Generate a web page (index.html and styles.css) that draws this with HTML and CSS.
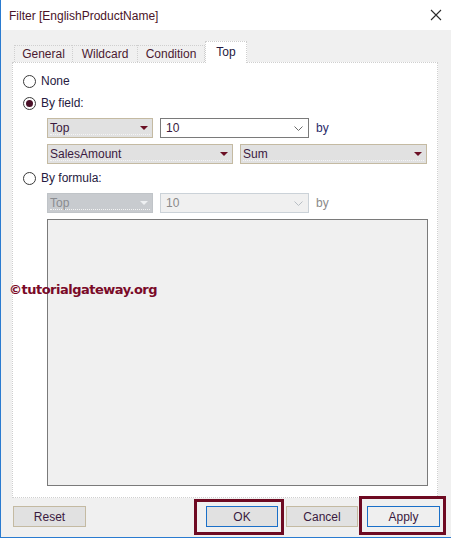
FILE: index.html
```html
<!DOCTYPE html>
<html>
<head>
<meta charset="utf-8">
<link rel="stylesheet" href="styles.css">
</head>
<body>
<div class="window">
  <div class="titlebar">
    <span class="title">Filter [EnglishProductName]</span>
    <svg class="close" width="12" height="12" viewBox="0 0 12 12"><path d="M1 1 L11 11 M11 1 L1 11" stroke="#2a2a2a" stroke-width="1.1" fill="none"/></svg>
  </div>
  <div class="body">
    <div class="tabs">
      <div class="tab t-general">General</div>
      <div class="tab t-wild">Wildcard</div>
      <div class="tab t-cond">Condition</div>
      <div class="tab active t-top">Top</div>
    </div>
    <div class="panel">
      <div class="radio-row r-none"><span class="radio"></span><span class="label">None</span></div>
      <div class="radio-row r-field"><span class="radio checked"></span><span class="label">By field:</span></div>
      <div class="combo-row row1">
        <div class="combo c-top"><span class="ctext">Top</span><span class="arrow"></span></div>
        <div class="editcombo"><span class="ctext">10</span><svg class="chev" width="9" height="5" viewBox="0 0 9 5"><path d="M0.5 0.5 L4.5 4.5 L8.5 0.5" stroke="#6a6a6a" fill="none"/></svg></div>
        <span class="by">by</span>
      </div>
      <div class="combo-row row2">
        <div class="combo c-sales"><span class="ctext">SalesAmount</span><span class="arrow"></span></div>
        <div class="combo c-sum"><span class="ctext">Sum</span><span class="arrow"></span></div>
      </div>
      <div class="radio-row r-formula"><span class="radio"></span><span class="label">By formula:</span></div>
      <div class="combo-row row3">
        <div class="combo c-top disabled"><span class="ctext">Top</span><span class="arrow"></span></div>
        <div class="editcombo disabled"><span class="ctext">10</span><svg class="chev" width="9" height="5" viewBox="0 0 9 5"><path d="M0.5 0.5 L4.5 4.5 L8.5 0.5" stroke="#b8bec4" fill="none"/></svg></div>
        <span class="by dis">by</span>
      </div>
      <div class="formula"></div>
    </div>
    <div class="buttons">
      <div class="btn b-reset">Reset</div>
      <div class="spacer"></div>
      <div class="btn b-ok default">OK</div>
      <div class="btn b-cancel">Cancel</div>
      <div class="btn b-apply default">Apply</div>
    </div>
  </div>
  <div class="watermark">©tutorialgateway.org</div>
  <div class="mark mark-ok"></div>
  <div class="mark mark-apply"></div>
</div>
</body>
</html>
```
FILE: styles.css
```css
html, body {
  margin: 0;
  padding: 0;
  background: #ffffff;
}
body {
  width: 451px;
  height: 540px;
  overflow: hidden;
  font-family: "Liberation Sans", Arial, sans-serif;
  font-size: 12px;
  color: #261a40;
}
.window {
  position: relative;
  width: 450px;
  height: 537px;
  border-left: 1px solid #2a7bd0;
  border-bottom: 1px solid #2a7bd0;
  background: #f0f0f0;
  display: flex;
  flex-direction: column;
}
.titlebar {
  height: 30px;
  background: #ffffff;
  display: flex;
  align-items: center;
  padding-left: 8px;
  padding-right: 9px;
  box-sizing: border-box;
}
.title {
  flex: 1;
  color: #4a1428;
  font-size: 12px;
  padding-top: 1px;
}
.close { display: block; }
.body {
  flex: 1;
  display: flex;
  flex-direction: column;
  padding: 11px 0 0 11px;
}
.tabs {
  display: flex;
  align-items: flex-end;
  height: 21px;
  padding-left: 2px;
}
.tab {
  height: 17px;
  line-height: 16px;
  text-align: center;
  box-sizing: border-box;
  border-top: 1px dotted #cfcfcf;
  border-left: 1px dotted #cfcfcf;
  background: #f0f0f0;
  color: #4b1a30;
}
.t-general { width: 58px; }
.t-wild { width: 65px; }
.t-cond { width: 68px; border-right: 1px dotted #cfcfcf; }
.tab.active {
  width: 42px;
  height: 22px;
  line-height: 20px;
  background: #ffffff;
  border: 1px dotted #cfcfcf;
  border-bottom: none;
  margin-bottom: -1px;
  position: relative;
  z-index: 1;
  color: #261a40;
}
.panel {
  width: 426px;
  height: 436px;
  box-sizing: border-box;
  background: #ffffff;
  border: 1px dotted #cfcfcf;
  padding: 12px 0 0 10px;
  display: flex;
  flex-direction: column;
}
.radio-row {
  display: flex;
  align-items: center;
  height: 13px;
}
.r-field { margin-top: 9px; }
.r-formula { margin-top: 8px; }
.radio {
  width: 13px;
  height: 13px;
  box-sizing: border-box;
  border: 1px solid #3a3a3a;
  border-radius: 50%;
  background: #ffffff;
  display: flex;
  align-items: center;
  justify-content: center;
}
.radio.checked::after {
  content: "";
  width: 7px;
  height: 7px;
  border-radius: 50%;
  background: #4a1028;
}
.label {
  margin-left: 5px;
  line-height: 13px;
}
.combo-row {
  display: flex;
  align-items: center;
  padding-left: 24px;
  gap: 7px;
}
.row1 { margin-top: 8px; }
.row2 { margin-top: 6px; }
.row3 { margin-top: 8px; }
.combo {
  height: 20px;
  box-sizing: border-box;
  border: 1px solid #c4baa2;
  background: #e1e1e1;
  display: flex;
  align-items: center;
  padding: 0 3px 0 2px;
  position: relative;
}
.combo::before {
  content: "";
  position: absolute;
  left: 2px; right: 2px; top: 2px; bottom: 2px;
  border-bottom: 1px dotted #f4f4f4;
}
.c-top { width: 106px; }
.c-sales { width: 186px; }
.c-sum { width: 187px; }
.ctext { flex: 1; position: relative; color: #3a1a40; }
.arrow {
  width: 0;
  height: 0;
  border-left: 4px solid transparent;
  border-right: 4px solid transparent;
  border-top: 4px solid #6b0f24;
  margin-right: 1px;
}
.combo.disabled {
  background: #c8cbcf;
  border-color: #c0c4c8;
}
.combo.disabled .ctext { color: #8a8c90; }
.combo.disabled .arrow { border-top-color: #eef0f2; }
.editcombo {
  width: 149px;
  height: 20px;
  box-sizing: border-box;
  border: 1px solid #7a7a7a;
  background: #ffffff;
  display: flex;
  align-items: center;
  padding: 0 5px 0 5px;
}
.editcombo .chev { display: block; }
.editcombo.disabled {
  border-color: #cbd2d8;
  background: #f0f0f0;
}
.editcombo.disabled .ctext { color: #8a8a8a; }
.by { color: #2a2a6a; margin-left: 0; }
.by.dis { color: #8a8a8a; }
.formula {
  margin-top: 6px;
  margin-left: 24px;
  width: 381px;
  height: 267px;
  box-sizing: border-box;
  border: 1px solid #7a7a7a;
  background: #f0f0f0;
}
.buttons {
  display: flex;
  align-items: flex-start;
  margin-top: 8px;
  padding-left: 1px;
}
.spacer { flex: 1; }
.btn {
  height: 21px;
  box-sizing: border-box;
  border: 1px solid #c4baa2;
  background: #e1e1e1;
  display: flex;
  align-items: center;
  justify-content: center;
  color: #3a1a40;
}
.b-reset { width: 73px; }
.b-ok { width: 72px; }
.b-cancel { width: 72px; margin-left: 8px; }
.b-apply { width: 73px; margin-left: 9px; margin-right: 11px; background: #efefef; }
.btn.default { border-color: #1a6fc8; }
.watermark {
  position: absolute;
  left: 8px;
  top: 282px;
  font-family: "DejaVu Sans", Verdana, sans-serif;
  font-weight: bold;
  font-size: 13px;
  letter-spacing: -0.5px;
  color: #7a0a28;
}
.mark {
  position: absolute;
  border: 3px solid #6e0a22;
  box-sizing: border-box;
}
.mark-ok { left: 193px; top: 499px; width: 90px; height: 36px; }
.mark-apply { left: 358px; top: 496px; width: 87px; height: 39px; }
```
